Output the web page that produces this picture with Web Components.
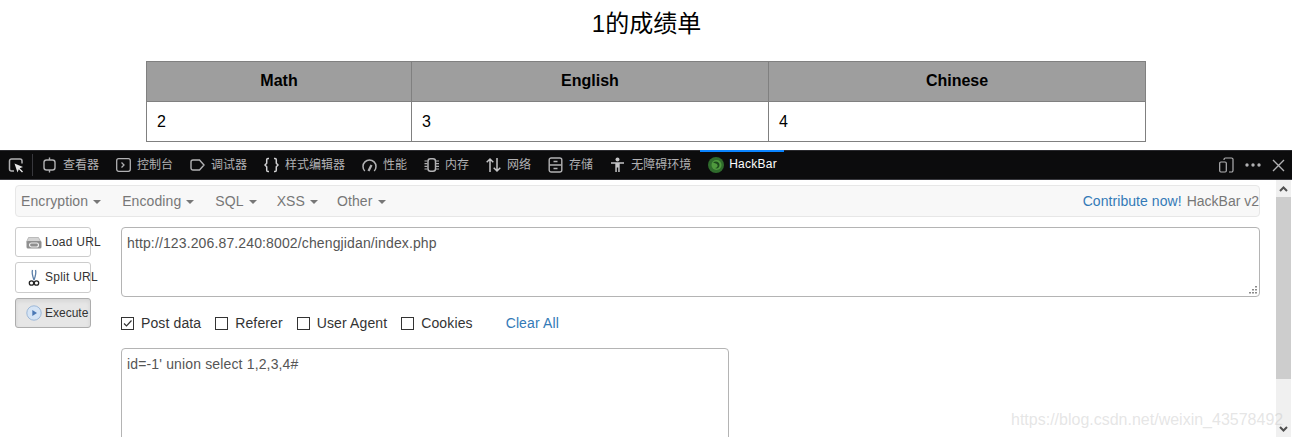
<!DOCTYPE html>
<html lang="zh">
<head>
<meta charset="utf-8">
<title>1的成绩单</title>
<style>
  html, body { margin: 0; height: 437px; overflow: hidden; background: #fff; }
  body { font-family: "Liberation Sans", "Noto Sans CJK SC", sans-serif; }
</style>
</head>
<body>
<score-report title-text="1的成绩单"></score-report>

<dev-toolbar>
  <tool-tab><svg slot="icon" width="15" height="16" viewBox="0 0 15 16" fill="none" stroke="#b1b1b3" stroke-width="1.4"><rect x="2" y="3" width="11" height="10" rx="2.500"/><path d="M7.500 .5V3M7.500 13v2.500"/></svg>查看器</tool-tab>
  <tool-tab><svg slot="icon" width="15" height="16" viewBox="0 0 15 16" fill="none" stroke="#b1b1b3" stroke-width="1.3"><rect x=".7" y="1.700" width="13.600" height="12.600" rx="2"/><path d="M5.500 5.500 8 8l-2.500 2.500"/></svg>控制台</tool-tab>
  <tool-tab><svg slot="icon" width="15" height="16" viewBox="0 0 15 16" fill="none" stroke="#b1b1b3" stroke-width="1.4"><path d="M3 3h6.500L14 8l-4.500 5H3a2 2 0 0 1-2-2V5a2 2 0 0 1 2-2z"/></svg>调试器</tool-tab>
  <tool-tab><svg slot="icon" width="15" height="16" viewBox="0 0 15 16" fill="none" stroke="#d0d0d2" stroke-width="1.500"><path d="M5 1.500H4a1.300 1.300 0 0 0-1.300 1.300v3.400L1 8l1.700 1.800v3.400A1.300 1.300 0 0 0 4 14.500h1M10 1.500h1a1.300 1.300 0 0 1 1.300 1.300v3.400L14 8l-1.700 1.800v3.400a1.300 1.300 0 0 1-1.300 1.300h-1"/></svg>样式编辑器</tool-tab>
  <tool-tab><svg slot="icon" width="15" height="16" viewBox="0 0 15 16" fill="none" stroke="#b1b1b3" stroke-width="1.500"><path d="M2.800 14A6.500 6.500 0 1 1 12.200 14"/><path d="M6.500 14 9.500 8" stroke-width="2.200"/></svg>性能</tool-tab>
  <tool-tab><svg slot="icon" width="15" height="16" viewBox="0 0 15 16" fill="none" stroke="#b1b1b3" stroke-width="1.200"><rect x="4" y="1.700" width="7.500" height="12.600" rx="2.500" stroke-width="1.500"/><path d="M.5 4h3M.5 6.700h3M.5 9.300h3M.5 12h3M12 4h3M12 6.700h3M12 9.300h3M12 12h3"/></svg>内存</tool-tab>
  <tool-tab><svg slot="icon" width="15" height="16" viewBox="0 0 15 16" fill="none" stroke="#c4c4c6" stroke-width="1.500"><path d="M4 15V2M.7 5.300 4 2l3.300 3.300M11 1v13M7.700 10.700 11 14l3.300-3.300"/></svg>网络</tool-tab>
  <tool-tab><svg slot="icon" width="15" height="16" viewBox="0 0 15 16" fill="none" stroke="#b1b1b3" stroke-width="1.400"><rect x="1.200" y="1" width="12.600" height="14" rx="2"/><path d="M1.500 8h12M5.500 4.500h4M5.500 11.500h4"/></svg>存储</tool-tab>
  <tool-tab><svg slot="icon" width="15" height="16" viewBox="0 0 15 16" fill="#c4c4c6"><circle cx="7.500" cy="2.500" r="2"/><path d="M1 5.200h13v1.600H9.700V15H8.200v-4.500H6.800V15H5.300V6.800H1z"/></svg>无障碍环境</tool-tab>
  <tool-tab active><svg slot="icon" width="16" height="16" viewBox="0 0 16 16"><circle cx="8" cy="8" r="8" fill="#2f6b2c"/><circle cx="8.500" cy="8" r="5" fill="#4f9a3e"/><path d="M5 5.500c3-2 6.500-.5 6.500 2.500S9 12 7 11c2 0 3-1.500 2.500-3S7 6 5 5.500z" fill="#1d4a1d"/></svg>HackBar</tool-tab>
</dev-toolbar>

<hack-bar>
  <hb-menu slot="menu">Encryption</hb-menu>
  <hb-menu slot="menu">Encoding</hb-menu>
  <hb-menu slot="menu">SQL</hb-menu>
  <hb-menu slot="menu" style="margin-left:-1px">XSS</hb-menu>
  <hb-menu slot="menu" style="margin-left:-2px">Other</hb-menu>

  <hb-button slot="actions" style="height:30px;letter-spacing:.25px"><svg slot="icon" width="16" height="14" viewBox="0 0 16 14"><path d="M2.500 2.500h10L15 7H.5z" fill="#d4d4d4" stroke="#a8a8a8" stroke-width=".7"/><rect x=".5" y="6" width="15" height="7.500" rx="1.500" fill="#8f8f8f"/><rect x="3.500" y="8" width="9" height="4" rx="2" fill="none" stroke="#eee" stroke-width="1.200"/></svg>Load URL</hb-button>
  <hb-button slot="actions" style="height:31px;letter-spacing:.25px;--lift:-1px"><svg slot="icon" width="16" height="18" viewBox="0 0 16 18" fill="none"><path d="M6.500 1c-1 3 0 6 1.500 10M9.500 1c1 3 0 6-1.500 10" stroke="#5b7fa8" stroke-width="1.300"/><circle cx="5.500" cy="14" r="2.200" stroke="#222" stroke-width="1.300"/><circle cx="10.500" cy="14" r="2.200" stroke="#222" stroke-width="1.300"/></svg>Split URL</hb-button>
  <hb-button slot="actions" pressed style="height:30px"><svg slot="icon" width="16" height="16" viewBox="0 0 16 16"><circle cx="8" cy="8" r="7.200" fill="#d5e4f5" stroke="#9db8d8"/><path d="M6.300 5v6L11 8z" fill="#4a78b5"/></svg>Execute</hb-button>

  <hb-field slot="url" style="height:70px;letter-spacing:.13px" grip>http://123.206.87.240:8002/chengjidan/index.php</hb-field>

  <hb-check slot="checks" checked>Post data</hb-check>
  <hb-check slot="checks">Referer</hb-check>
  <hb-check slot="checks">User Agent</hb-check>
  <hb-check slot="checks">Cookies</hb-check>

  <hb-field slot="post" style="width:608px;height:120px;letter-spacing:.15px">id=-1' union select 1,2,3,4#</hb-field>
</hack-bar>

<site-mark>https://blog.csdn.net/weixin_43578492</site-mark>

<script>
function shadow(el, html) {
  el.attachShadow({ mode: "open" }).innerHTML = html
}

class ScoreReport extends HTMLElement {
  connectedCallback() {
    if (this.shadowRoot) return
    shadow(this, `
      <style>
        :host { display: block; height: 150px; box-sizing: border-box; padding-top: 10px; color: #000; }
        h1 { margin: 0; padding-left: 1px; font: 400 24px/28px "Liberation Sans", "Noto Sans CJK SC", sans-serif; text-align: center; }
        table { width: 999px; margin: 23px 0 0 146px; border-collapse: collapse; table-layout: fixed; font: 16px "Liberation Sans", sans-serif; }
        th, td { border: 1px solid #808080; height: 40px; box-sizing: border-box; }
        th { background: #9e9e9e; font-weight: 700; text-align: center; padding: 0 10px 2px; }
        td { text-align: left; padding: 0 10px; }
      </style>
      <h1>${this.getAttribute("title-text")}</h1>
      <table>
        <colgroup><col style="width:265px"><col style="width:357px"><col style="width:377px"></colgroup>
        <tr><th>Math</th><th>English</th><th>Chinese</th></tr>
        <tr><td>2</td><td>3</td><td>4</td></tr>
      </table>`)
  }
}
customElements.define("score-report", ScoreReport)

class DevToolbar extends HTMLElement {
  constructor() {
    super()
    shadow(this, `
      <style>
        :host { display: flex; align-items: stretch; height: 30px; box-sizing: border-box; background: #0c0c0d; border-top: 1px solid #2a2a2e; border-bottom: 1px solid #38383d; }
        .pick { display: flex; align-items: center; padding: 0 8px; }
        .sep { width: 1px; margin: 3px 1px 3px 0; background: #38383d; }
        .tabs { display: flex; flex: 1; }
        .right { display: flex; align-items: center; gap: 11px; padding-right: 7px; }
      </style>
      <div class="pick">
        <svg width="16" height="16" viewBox="0 0 16 16" fill="none"><path d="M6 14H3.500A2 2 0 0 1 1.500 12V4a2 2 0 0 1 2-2h8.500a2 2 0 0 1 2 2v2.500" stroke="#b1b1b3" stroke-width="1.500"/><path d="M6.500 6.500 15 10l-3.300 1.200L15 14.500l-1 1-3.200-3.300L9.500 15.500z" fill="#e8e8e8"/></svg>
      </div>
      <div class="sep"></div>
      <div class="tabs"><slot></slot></div>
      <div class="right">
        <svg width="15" height="16" viewBox="0 0 15 16" fill="none" stroke="#b1b1b3" stroke-width="1.200"><path d="M5 3V2.500A1.500 1.500 0 0 1 6.500 1h6A1.500 1.500 0 0 1 14 2.500v11a1.500 1.500 0 0 1-1.500 1.500H10"/><rect x=".7" y="5" width="6.600" height="10" rx="1.200"/></svg>
        <svg width="16" height="16" viewBox="0 0 16 16" fill="#b1b1b3"><circle cx="2" cy="8" r="1.700"/><circle cx="8" cy="8" r="1.700"/><circle cx="14" cy="8" r="1.700"/></svg>
        <svg width="13" height="13" viewBox="0 0 13 13" fill="none" stroke="#b1b1b3" stroke-width="1.400"><path d="M1 1l11 11M12 1 1 12"/></svg>
      </div>`)
  }
}
customElements.define("dev-toolbar", DevToolbar)

class ToolTab extends HTMLElement {
  constructor() {
    super()
    shadow(this, `
      <style>
        :host { display: flex; align-items: center; gap: 6px; padding: 0 9px 1px 8px; font: 12px "Liberation Sans", "Noto Sans CJK SC", sans-serif; color: #b1b1b3; position: relative; white-space: nowrap; }
        :host([active]) { gap: 5px; padding-right: 7px; color: #fcfcfc; letter-spacing: .25px; }
        :host([active])::before { content: ""; position: absolute; left: 0; right: 0; top: -1px; height: 2px; background: #0a84ff; }
        ::slotted(svg) { display: block; flex: none; }
        span { position: relative; top: -1px; }
      </style>
      <slot name="icon"></slot><span><slot></slot></span>`)
  }
}
customElements.define("tool-tab", ToolTab)

class HackBar extends HTMLElement {
  constructor() {
    super()
    shadow(this, `
      <style>
        :host { display: flex; height: 257px; overflow: hidden; font: 14px "Liberation Sans", sans-serif; color: #333; }
        .main { width: 1245px; margin-left: 15px; padding-top: 5px; flex: none; }
        nav { display: flex; align-items: center; justify-content: space-between; height: 32px; box-sizing: border-box; padding: 0 0 0 5px; background: #f8f8f8; border: 1px solid #e7e7e7; border-radius: 4px; color: #777; white-space: nowrap; }
        .menus { display: flex; gap: 21px; letter-spacing: .1px; }
        nav a { color: #337ab7; margin-right: 5px; letter-spacing: .06px; }
        .row { display: flex; gap: 30px; margin-top: 10px; }
        .actions { display: flex; flex-direction: column; gap: 5px; width: 76px; flex: none; }
        .fields { flex: 1; min-width: 0; }
        .checks { display: flex; align-items: center; height: 16px; margin: 18px 0 17px; letter-spacing: .12px; }
        .checks a { color: #337ab7; margin-left: 19px; }
        .scroll { position: relative; width: 15px; margin-left: 16px; background: #f0f0f0; flex: none; display: flex; flex-direction: column; }
        .scroll svg { display: block; margin: 6px auto 0; }
        .thumb { position: absolute; left: 0; right: 0; top: 17px; height: 182px; background: #cdcdcd; }
        .scroll .down { position: absolute; left: 3px; bottom: 5px; margin: 0; }
      </style>
      <div class="main">
        <nav>
          <div class="menus"><slot name="menu"></slot></div>
          <div><a>Contribute now!</a>HackBar v2</div>
        </nav>
        <div class="row">
          <div class="actions"><slot name="actions"></slot></div>
          <div class="fields">
            <slot name="url"></slot>
            <div class="checks"><slot name="checks"></slot><a>Clear All</a></div>
            <slot name="post"></slot>
          </div>
        </div>
      </div>
      <div class="scroll">
        <svg width="9" height="6" viewBox="0 0 9 6" fill="none" stroke="#505050" stroke-width="2"><path d="M1 5l3.500-3.500L8 5"/></svg>
        <div class="thumb"></div>
        <svg class="down" width="9" height="6" viewBox="0 0 9 6" fill="none" stroke="#505050" stroke-width="2"><path d="M1 1l3.500 3.500L8 1"/></svg>
      </div>`)
  }
}
customElements.define("hack-bar", HackBar)

class HbMenu extends HTMLElement {
  constructor() {
    super()
    shadow(this, `
      <style>
        :host { display: flex; align-items: center; gap: 5px; }
        i { width: 0; height: 0; margin-top: 2px; border-top: 4px solid #777; border-left: 4px solid transparent; border-right: 4px solid transparent; }
      </style>
      <slot></slot><i></i>`)
  }
}
customElements.define("hb-menu", HbMenu)

class HbButton extends HTMLElement {
  constructor() {
    super()
    shadow(this, `
      <style>
        :host { display: flex; align-items: center; box-sizing: border-box; padding-left: 10px; background: #fff; border: 1px solid #ccc; border-radius: 3px; font-size: 12px; color: #333; white-space: nowrap; }
        :host([pressed]) { background: #e6e6e6; border-color: #adadad; box-shadow: inset 0 2px 4px rgba(0,0,0,.08); }
        .icon { width: 16px; margin-right: 3px; display: flex; justify-content: center; flex: none; }
        .label { position: relative; top: var(--lift, 0); }
        ::slotted(svg) { display: block; }
      </style>
      <span class="icon"><slot name="icon"></slot></span><span class="label"><slot></slot></span>`)
  }
}
customElements.define("hb-button", HbButton)

class HbField extends HTMLElement {
  constructor() {
    super()
    shadow(this, `
      <style>
        :host { display: block; position: relative; box-sizing: border-box; padding: 6px 5px; background: #fff; border: 1px solid #b4b4b4; border-radius: 4px; color: #555; font-size: 14px; line-height: 18px; }
        svg { position: absolute; right: 2px; bottom: 2px; display: none; }
        :host([grip]) svg { display: block; }
      </style>
      <slot></slot>
      <svg width="9" height="9" viewBox="0 0 9 9" fill="#8a8a8a"><rect x="7" y="1" width="2" height="1.500"/><rect x="4" y="4" width="2" height="1.500"/><rect x="7" y="4" width="2" height="1.500"/><rect x="1" y="7" width="2" height="1.500"/><rect x="4" y="7" width="2" height="1.500"/><rect x="7" y="7" width="2" height="1.500"/></svg>`)
  }
}
customElements.define("hb-field", HbField)

class HbCheck extends HTMLElement {
  constructor() {
    super()
    shadow(this, `
      <style>
        :host { display: flex; align-items: center; gap: 7px; margin-right: 14px; color: #333; white-space: nowrap; }
        i { display: block; width: 13px; height: 13px; box-sizing: border-box; border: 1px solid #333; background: #fff; }
        svg { display: none; }
        :host([checked]) svg { display: block; }
      </style>
      <i><svg width="11" height="11" viewBox="0 0 11 11" fill="none" stroke="#333" stroke-width="1.200"><path d="M2 5.500 4.500 8 9.500 2.500"/></svg></i><slot></slot>`)
  }
}
customElements.define("hb-check", HbCheck)

class SiteMark extends HTMLElement {
  constructor() {
    super()
    shadow(this, `
      <style>
        :host { position: absolute; left: 1011px; top: 410px; font: 16px/19px "Liberation Sans", sans-serif; color: rgba(190,190,190,.4); white-space: nowrap; }
      </style>
      <slot></slot>`)
  }
}
customElements.define("site-mark", SiteMark)
</script>
</body>
</html>
